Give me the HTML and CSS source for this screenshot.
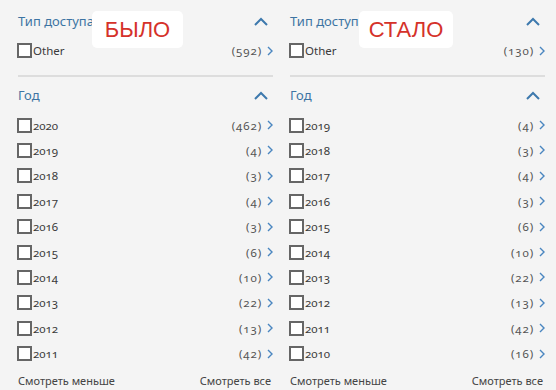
FILE: index.html
```html
<!DOCTYPE html>
<html lang="ru">
<head>
    <meta charset="UTF-8">
    <title>Фильтры - было / стало</title>
    <link rel="stylesheet" href="styles.css">
</head>
<body>
    <div class="compare">
        <div class="panel">
            <div class="facet-head">
                <span class="facet-title">Тип доступа</span>
                <span class="info"></span>
                <svg class="caret" width="14" height="9" viewBox="0 0 14 9"><path d="M1 8 L7 2 L13 8" fill="none" stroke="#3d79ad" stroke-width="2"/></svg>
            </div>
            <div class="row"><span class="box"></span><span class="name">Other</span><span class="count">(592)</span><svg class="arrow" width="6" height="10" viewBox="0 0 6 10"><path d="M1 1 L5 5 L1 9" fill="none" stroke="#4a86c0" stroke-width="1.4"/></svg></div>
            <div class="sep"></div>
            <div class="facet-head">
                <span class="facet-title">Год</span>
                <svg class="caret" width="14" height="9" viewBox="0 0 14 9"><path d="M1 8 L7 2 L13 8" fill="none" stroke="#3d79ad" stroke-width="2"/></svg>
            </div>
            <div class="list">
                <div class="row"><span class="box"></span><span class="name">2020</span><span class="count">(462)</span><svg class="arrow" width="6" height="10" viewBox="0 0 6 10"><path d="M1 1 L5 5 L1 9" fill="none" stroke="#4a86c0" stroke-width="1.4"/></svg></div>
                <div class="row"><span class="box"></span><span class="name">2019</span><span class="count">(4)</span><svg class="arrow" width="6" height="10" viewBox="0 0 6 10"><path d="M1 1 L5 5 L1 9" fill="none" stroke="#4a86c0" stroke-width="1.4"/></svg></div>
                <div class="row"><span class="box"></span><span class="name">2018</span><span class="count">(3)</span><svg class="arrow" width="6" height="10" viewBox="0 0 6 10"><path d="M1 1 L5 5 L1 9" fill="none" stroke="#4a86c0" stroke-width="1.4"/></svg></div>
                <div class="row"><span class="box"></span><span class="name">2017</span><span class="count">(4)</span><svg class="arrow" width="6" height="10" viewBox="0 0 6 10"><path d="M1 1 L5 5 L1 9" fill="none" stroke="#4a86c0" stroke-width="1.4"/></svg></div>
                <div class="row"><span class="box"></span><span class="name">2016</span><span class="count">(3)</span><svg class="arrow" width="6" height="10" viewBox="0 0 6 10"><path d="M1 1 L5 5 L1 9" fill="none" stroke="#4a86c0" stroke-width="1.4"/></svg></div>
                <div class="row"><span class="box"></span><span class="name">2015</span><span class="count">(6)</span><svg class="arrow" width="6" height="10" viewBox="0 0 6 10"><path d="M1 1 L5 5 L1 9" fill="none" stroke="#4a86c0" stroke-width="1.4"/></svg></div>
                <div class="row"><span class="box"></span><span class="name">2014</span><span class="count">(10)</span><svg class="arrow" width="6" height="10" viewBox="0 0 6 10"><path d="M1 1 L5 5 L1 9" fill="none" stroke="#4a86c0" stroke-width="1.4"/></svg></div>
                <div class="row"><span class="box"></span><span class="name">2013</span><span class="count">(22)</span><svg class="arrow" width="6" height="10" viewBox="0 0 6 10"><path d="M1 1 L5 5 L1 9" fill="none" stroke="#4a86c0" stroke-width="1.4"/></svg></div>
                <div class="row"><span class="box"></span><span class="name">2012</span><span class="count">(13)</span><svg class="arrow" width="6" height="10" viewBox="0 0 6 10"><path d="M1 1 L5 5 L1 9" fill="none" stroke="#4a86c0" stroke-width="1.4"/></svg></div>
                <div class="row"><span class="box"></span><span class="name">2011</span><span class="count">(42)</span><svg class="arrow" width="6" height="10" viewBox="0 0 6 10"><path d="M1 1 L5 5 L1 9" fill="none" stroke="#4a86c0" stroke-width="1.4"/></svg></div>
            </div>
            <div class="more"><span>Смотреть меньше</span><span>Смотреть все</span></div>
            <div class="tag tag-old">БЫЛО</div>
        </div>

        <div class="panel">
            <div class="facet-head">
                <span class="facet-title">Тип доступа</span>
                <span class="info"></span>
                <svg class="caret" width="14" height="9" viewBox="0 0 14 9"><path d="M1 8 L7 2 L13 8" fill="none" stroke="#3d79ad" stroke-width="2"/></svg>
            </div>
            <div class="row"><span class="box"></span><span class="name">Other</span><span class="count">(130)</span><svg class="arrow" width="6" height="10" viewBox="0 0 6 10"><path d="M1 1 L5 5 L1 9" fill="none" stroke="#4a86c0" stroke-width="1.4"/></svg></div>
            <div class="sep"></div>
            <div class="facet-head">
                <span class="facet-title">Год</span>
                <svg class="caret" width="14" height="9" viewBox="0 0 14 9"><path d="M1 8 L7 2 L13 8" fill="none" stroke="#3d79ad" stroke-width="2"/></svg>
            </div>
            <div class="list">
                <div class="row"><span class="box"></span><span class="name">2019</span><span class="count">(4)</span><svg class="arrow" width="6" height="10" viewBox="0 0 6 10"><path d="M1 1 L5 5 L1 9" fill="none" stroke="#4a86c0" stroke-width="1.4"/></svg></div>
                <div class="row"><span class="box"></span><span class="name">2018</span><span class="count">(3)</span><svg class="arrow" width="6" height="10" viewBox="0 0 6 10"><path d="M1 1 L5 5 L1 9" fill="none" stroke="#4a86c0" stroke-width="1.4"/></svg></div>
                <div class="row"><span class="box"></span><span class="name">2017</span><span class="count">(4)</span><svg class="arrow" width="6" height="10" viewBox="0 0 6 10"><path d="M1 1 L5 5 L1 9" fill="none" stroke="#4a86c0" stroke-width="1.4"/></svg></div>
                <div class="row"><span class="box"></span><span class="name">2016</span><span class="count">(3)</span><svg class="arrow" width="6" height="10" viewBox="0 0 6 10"><path d="M1 1 L5 5 L1 9" fill="none" stroke="#4a86c0" stroke-width="1.4"/></svg></div>
                <div class="row"><span class="box"></span><span class="name">2015</span><span class="count">(6)</span><svg class="arrow" width="6" height="10" viewBox="0 0 6 10"><path d="M1 1 L5 5 L1 9" fill="none" stroke="#4a86c0" stroke-width="1.4"/></svg></div>
                <div class="row"><span class="box"></span><span class="name">2014</span><span class="count">(10)</span><svg class="arrow" width="6" height="10" viewBox="0 0 6 10"><path d="M1 1 L5 5 L1 9" fill="none" stroke="#4a86c0" stroke-width="1.4"/></svg></div>
                <div class="row"><span class="box"></span><span class="name">2013</span><span class="count">(22)</span><svg class="arrow" width="6" height="10" viewBox="0 0 6 10"><path d="M1 1 L5 5 L1 9" fill="none" stroke="#4a86c0" stroke-width="1.4"/></svg></div>
                <div class="row"><span class="box"></span><span class="name">2012</span><span class="count">(13)</span><svg class="arrow" width="6" height="10" viewBox="0 0 6 10"><path d="M1 1 L5 5 L1 9" fill="none" stroke="#4a86c0" stroke-width="1.4"/></svg></div>
                <div class="row"><span class="box"></span><span class="name">2011</span><span class="count">(42)</span><svg class="arrow" width="6" height="10" viewBox="0 0 6 10"><path d="M1 1 L5 5 L1 9" fill="none" stroke="#4a86c0" stroke-width="1.4"/></svg></div>
                <div class="row"><span class="box"></span><span class="name">2010</span><span class="count">(16)</span><svg class="arrow" width="6" height="10" viewBox="0 0 6 10"><path d="M1 1 L5 5 L1 9" fill="none" stroke="#4a86c0" stroke-width="1.4"/></svg></div>
            </div>
            <div class="more"><span>Смотреть меньше</span><span>Смотреть все</span></div>
            <div class="tag tag-new">СТАЛО</div>
        </div>
    </div>
</body>
</html>
```

FILE: styles.css
```css
body {
    margin: 0;
    background-color: #f4f4f4;
    font-family: "Noto Sans", "Open Sans", sans-serif;
    font-variant-numeric: oldstyle-nums;
    color: #3a3a3a;
}

.compare {
    display: flex;
    gap: 17px;
    padding: 11px 11px 0 18px;
}

.panel {
    position: relative;
    width: 255px;
    display: flex;
    flex-direction: column;
}

.facet-head {
    display: flex;
    align-items: center;
    height: 20px;
}

.facet-title {
    font-size: 13px;
    color: #3d74a3;
}

.info {
    width: 8px;
    height: 8px;
    border: 1px solid #d6d6d6;
    border-radius: 50%;
    margin-left: 7px;
}

.caret {
    margin-left: auto;
    margin-right: 5px;
}

.row {
    display: flex;
    align-items: center;
    height: 25.4px;
    font-size: 11.5px;
}

.facet-head + .row {
    margin-top: 7px;
}

.box {
    width: 11px;
    height: 11px;
    border: 2px solid #666;
    background-color: #fff;
    margin-left: -1px;
}

.name {
    margin-left: 1px;
}

.count {
    margin-left: auto;
    color: #555;
    letter-spacing: 0.9px;
}

.arrow {
    margin-left: 5px;
}

.sep {
    height: 2px;
    background-color: #ddd;
    margin: 12px 0 8px;
}

.list {
    margin-top: 7px;
}

.more {
    display: flex;
    justify-content: space-between;
    margin-top: 4px;
    padding-right: 2px;
    height: 20px;
    align-items: center;
    font-size: 11px;
    color: #444;
}

.tag {
    position: absolute;
    top: 0;
    height: 37px;
    background-color: #fff;
    border-radius: 5px;
    font-family: "Liberation Sans", Arial, sans-serif;
    font-size: 22px;
    color: #d5322a;
    display: flex;
    align-items: center;
    justify-content: center;
}

.tag-old {
    left: 74px;
    width: 91px;
}

.tag-new {
    left: 69px;
    width: 94px;
}
```
